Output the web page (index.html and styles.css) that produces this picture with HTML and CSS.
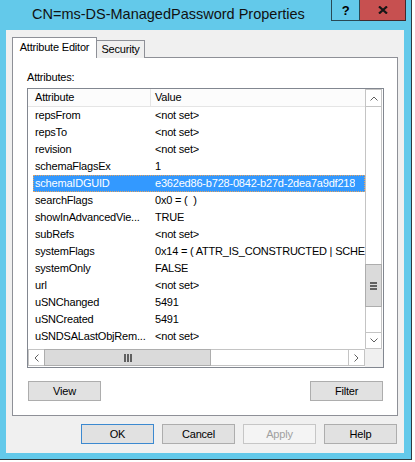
FILE: index.html
```html
<!DOCTYPE html>
<html>
<head>
    <title>CN=ms-DS-ManagedPassword Properties</title>
    <meta name="viewport" content="width=device-width, initial-scale=1">
    <link rel="stylesheet" href="styles.css">
</head>
<body>
    <div class="window">
        <div class="titlebar">
            <span class="title">CN=ms-DS-ManagedPassword Properties</span>
            <div class="caption-buttons">
                <span class="caption-btn help-btn">?</span>
                <span class="caption-btn close-btn">
                    <svg width="10" height="8" viewBox="0 0 10 8">
                        <path d="M1 0.5 L9 7.5 M9 0.5 L1 7.5" stroke="#161616" stroke-width="2.2" fill="none"/>
                    </svg>
                </span>
            </div>
        </div>

        <div class="client">
            <div class="tabs">
                <div class="tab active">Attribute Editor</div>
                <div class="tab">Security</div>
            </div>

            <div class="tab-page">
                <div class="field-label">Attributes:</div>

                <div class="listview">
                    <div class="list-body">
                        <div class="list-header">
                            <div class="col-name">Attribute</div>
                            <div class="col-value">Value</div>
                        </div>
                        <div class="row"><span class="col-name">repsFrom</span><span class="col-value">&lt;not set&gt;</span></div>
                        <div class="row"><span class="col-name">repsTo</span><span class="col-value">&lt;not set&gt;</span></div>
                        <div class="row"><span class="col-name">revision</span><span class="col-value">&lt;not set&gt;</span></div>
                        <div class="row"><span class="col-name">schemaFlagsEx</span><span class="col-value">1</span></div>
                        <div class="row selected"><span class="col-name">schemaIDGUID</span><span class="col-value">e362ed86-b728-0842-b27d-2dea7a9df218</span></div>
                        <div class="row"><span class="col-name">searchFlags</span><span class="col-value">0x0 = (&nbsp;&nbsp;)</span></div>
                        <div class="row"><span class="col-name">showInAdvancedVie...</span><span class="col-value">TRUE</span></div>
                        <div class="row"><span class="col-name">subRefs</span><span class="col-value">&lt;not set&gt;</span></div>
                        <div class="row"><span class="col-name">systemFlags</span><span class="col-value">0x14 = ( ATTR_IS_CONSTRUCTED | SCHE</span></div>
                        <div class="row"><span class="col-name">systemOnly</span><span class="col-value">FALSE</span></div>
                        <div class="row"><span class="col-name">url</span><span class="col-value">&lt;not set&gt;</span></div>
                        <div class="row"><span class="col-name">uSNChanged</span><span class="col-value">5491</span></div>
                        <div class="row"><span class="col-name">uSNCreated</span><span class="col-value">5491</span></div>
                        <div class="row"><span class="col-name">uSNDSALastObjRem...</span><span class="col-value">&lt;not set&gt;</span></div>
                    </div>

                    <div class="vscroll">
                        <div class="sb-btn sb-up">
                            <svg width="8" height="5" viewBox="0 0 8 5"><path d="M0.5 4.5 L4 1 L7.5 4.5" stroke="#606060" fill="none"/></svg>
                        </div>
                        <div class="sb-track">
                            <div class="sb-thumb">
                                <svg width="7" height="8" viewBox="0 0 7 8" fill="#606060">
                                    <rect x="0" y="0" width="7" height="2"/>
                                    <rect x="0" y="3" width="7" height="2"/>
                                    <rect x="0" y="6" width="7" height="2"/>
                                </svg>
                            </div>
                        </div>
                        <div class="sb-btn sb-down">
                            <svg width="8" height="5" viewBox="0 0 8 5"><path d="M0.5 0.5 L4 4 L7.5 0.5" stroke="#606060" fill="none"/></svg>
                        </div>
                    </div>

                    <div class="hscroll">
                        <div class="sb-btn sb-left">
                            <svg width="5" height="8" viewBox="0 0 5 8"><path d="M4.5 0.5 L1 4 L4.5 7.5" stroke="#606060" fill="none"/></svg>
                        </div>
                        <div class="sb-track">
                            <div class="sb-thumb">
                                <svg width="8" height="8" viewBox="0 0 8 8" fill="#606060">
                                    <rect x="0" y="0" width="2" height="8"/>
                                    <rect x="3" y="0" width="2" height="8"/>
                                    <rect x="6" y="0" width="2" height="8"/>
                                </svg>
                            </div>
                        </div>
                        <div class="sb-btn sb-right">
                            <svg width="5" height="8" viewBox="0 0 5 8"><path d="M0.5 0.5 L4 4 L0.5 7.5" stroke="#606060" fill="none"/></svg>
                        </div>
                    </div>

                    <div class="sb-corner"></div>
                </div>

                <div class="page-buttons">
                    <button class="btn">View</button>
                    <button class="btn">Filter</button>
                </div>
            </div>

            <div class="dialog-buttons">
                <button class="btn default">OK</button>
                <button class="btn">Cancel</button>
                <button class="btn" disabled>Apply</button>
                <button class="btn">Help</button>
            </div>
        </div>
    </div>
</body>
</html>
```

FILE: styles.css
```css
* {
    box-sizing: border-box;
}
body {
    margin: 0;
    background: #fff;
    font-family: "Liberation Sans", Arial, sans-serif;
    font-size: 11px;
    letter-spacing: -0.2px;
    color: #000;
}

/* window frame */
.window {
    width: 412px;
    height: 460px;
    background: #63c9ea;
    border-right: 1px solid #2f3b40;
    border-bottom: 1px solid #2f3b40;
    padding: 0 7px 6px 6px;
    display: flex;
    flex-direction: column;
}
.titlebar {
    height: 30px;
    display: flex;
    align-items: flex-start;
    justify-content: space-between;
    margin-right: -2px;
}
.title {
    padding-left: 26px;
    font-size: 14.5px;
    letter-spacing: 0;
    line-height: 29px;
    color: #111;
}
.caption-buttons {
    display: flex;
}
.caption-btn {
    height: 21px;
    display: flex;
    align-items: center;
    justify-content: center;
    border: 1px solid rgba(20, 30, 35, 0.75);
    border-top: none;
}
.help-btn {
    width: 29px;
    font-weight: bold;
    font-size: 13px;
}
.close-btn {
    width: 46px;
    border-left: none;
    background: #c75050;
}

/* dialog body */
.client {
    flex: 1;
    background: #f0f0f0;
    padding: 7px 6px 0 6px;
}
.tabs {
    display: flex;
    align-items: flex-end;
    height: 21px;
    margin-bottom: -1px;
    position: relative;
    z-index: 1;
}
.tab {
    border: 1px solid #8e9097;
    border-bottom: none;
    text-align: center;
    background: #f0f0f0;
}
.tab.active {
    width: 85px;
    height: 21px;
    line-height: 19px;
    background: #fff;
    position: relative;
    z-index: 1;
}
.tab + .tab {
    width: 49px;
    height: 18px;
    line-height: 17px;
    margin-left: -1px;
}
.tab-page {
    height: 359px;
    background: #fff;
    border: 1px solid #8e9097;
    padding: 12px 0 0 14px;
}
.field-label {
    line-height: 14px;
}

/* attribute list */
.listview {
    width: 357px;
    height: 280px;
    margin-top: 4px;
    border: 1px solid #828790;
    display: grid;
    grid-template-columns: 1fr 18px;
    grid-template-rows: 1fr 18px;
}
.list-body {
    overflow: hidden;
}
.list-header {
    display: flex;
    height: 18px;
    line-height: 17px;
    background: #fcfcfc;
    border-bottom: 1px solid #e5e5e5;
}
.list-header .col-name {
    width: 122px;
    padding-left: 7px;
}
.list-header .col-value {
    flex: 1;
    border-left: 1px solid #e5e5e5;
    padding-left: 4px;
}
.row {
    display: flex;
    height: 17px;
    line-height: 17px;
    margin-left: 5px;
    white-space: nowrap;
}
.row .col-name {
    width: 117px;
    flex-shrink: 0;
    padding-left: 2px;
    overflow: hidden;
}
.row .col-value {
    padding-left: 5px;
    overflow: hidden;
}
.row.selected {
    background: #3399ff;
    color: #fff;
    outline: 1px dotted #e9a35c;
    outline-offset: -1px;
}

/* scroll bars */
.sb-btn {
    display: flex;
    align-items: center;
    justify-content: center;
    border: 1px solid #c4c4c4;
    background: #fff;
}
.sb-thumb {
    display: flex;
    align-items: center;
    justify-content: center;
    background: #dadada;
    border: 1px solid #adadad;
}
.vscroll {
    grid-column: 2;
    grid-row: 1;
    display: flex;
    flex-direction: column;
    margin-right: 1px;
}
.vscroll .sb-up {
    height: 18px;
}
.vscroll .sb-down {
    height: 17px;
}
.vscroll .sb-track {
    flex: 1;
    border-left: 1px solid #c4c4c4;
    border-right: 1px solid #c4c4c4;
}
.vscroll .sb-thumb {
    height: 43px;
    margin: 157px -1px 0;
}
.hscroll {
    grid-column: 1;
    grid-row: 2;
    display: flex;
    margin-bottom: 1px;
}
.hscroll .sb-btn {
    width: 17px;
}
.hscroll .sb-track {
    flex: 1;
    border-top: 1px solid #c4c4c4;
    border-bottom: 1px solid #c4c4c4;
}
.hscroll .sb-thumb {
    width: 167px;
    height: calc(100% + 2px);
    margin: -1px 0 0 -1px;
}
.sb-corner {
    grid-column: 2;
    grid-row: 2;
    background: #f0f0f0;
}

/* buttons */
.btn {
    width: 73px;
    height: 20px;
    padding: 0;
    font-family: inherit;
    font-size: 11px;
    letter-spacing: inherit;
    color: #000;
    background: #e1e1e1;
    border: 1px solid #adadad;
}
.btn.default {
    border-color: #3c89d0;
}
.btn:disabled {
    background: #f4f4f4;
    border-color: #c6c6c6;
    color: #a0a0a0;
}
.page-buttons {
    display: flex;
    justify-content: space-between;
    width: 357px;
    padding: 0 1px;
    margin-top: 13px;
}
.dialog-buttons {
    display: flex;
    justify-content: flex-end;
    gap: 8px;
    margin-top: 8px;
    padding-right: 1px;
}
```
